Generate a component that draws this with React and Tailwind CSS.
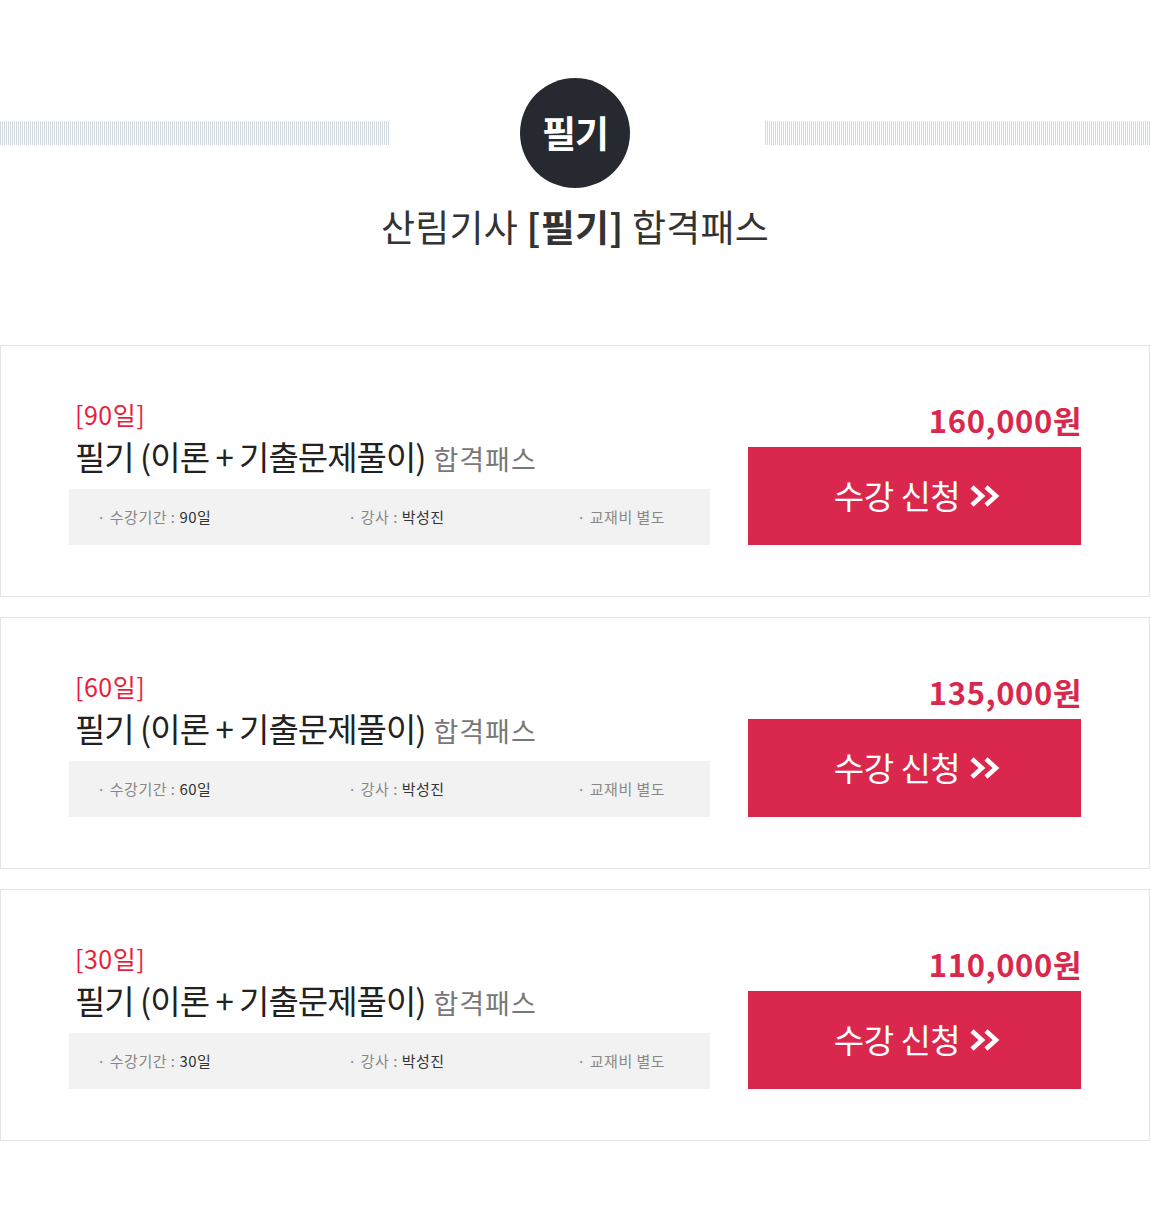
import React from 'react';

const courses = [
  { days: 90, price: '160,000' },
  { days: 60, price: '135,000' },
  { days: 30, price: '110,000' },
];

const Stripe = ({ className }) => (
  <div
    className={`h-[24px] bg-[repeating-linear-gradient(90deg,#d2dadf_0_1px,transparent_1px_2px)] ${className}`}
  />
);

const Chevrons = () => (
  <svg width="31" height="22" viewBox="0 0 31 22" fill="none" className="ml-[10px]">
    <path d="M2 2 L12 11 L2 20" stroke="white" strokeWidth="4.5" />
    <path d="M16 2 L26 11 L16 20" stroke="white" strokeWidth="4.5" />
  </svg>
);

const CourseCard = ({ days, price }) => (
  <div className="h-[252px] border border-[#e3e3e3] flex items-end justify-between pl-[68px] pr-[68px] pb-[51px]">
    <div className="w-[641px]">
      <p className="pl-[6px] text-[25px] leading-[30px] text-[#ec1c3d] tracking-[0.5px]">[{days}일]</p>
      <p className="pl-[6px] mt-[5px] leading-[44px] text-[#222] flex items-baseline">
        <span className="text-[33px] tracking-[-1px]">필기 (이론 + 기출문제풀이)</span>
        <span className="ml-[8px] text-[27px] text-[#777] tracking-[1px]">합격패스</span>
      </p>
      <div className="mt-[8px] h-[56px] bg-[#f2f2f2] flex items-center text-[15px] text-[#888] tracking-[0.5px]">
        <span className="ml-[28px] w-[251px]">
          · 수강기간 : <span className="text-[#333]">{days}일</span>
        </span>
        <span className="w-[229px]">
          · 강사 : <span className="text-[#333]">박성진</span>
        </span>
        <span>· 교재비 별도</span>
      </div>
    </div>
    <div className="w-[333px] flex flex-col items-end">
      <p className="-mr-[1px] text-[31px] leading-[40px] font-bold text-[#d9284d] tracking-[0.6px]">{price}원</p>
      <button className="mt-[7px] w-[333px] h-[98px] bg-[#da274d] text-white flex items-center justify-center pl-[6px]">
        <span className="text-[33px] tracking-[-0.5px]">수강 신청</span>
        <Chevrons />
      </button>
    </div>
  </div>
);

const App = () => {
  return (
    <div className="w-[1150px] min-h-[1231px] bg-white font-['Noto_Sans_CJK_KR',sans-serif]">
      <div className="pt-[78px] flex items-center">
        <Stripe className="w-[389px]" />
        <div className="ml-[131px] w-[110px] h-[110px] rounded-full bg-[#262a30] flex items-center justify-center">
          <span className="text-white text-[37px] font-bold leading-none tracking-[-1px] -mt-[2px]">필기</span>
        </div>
        <Stripe className="ml-[135px] flex-1" />
      </div>
      <h1 className="mt-[12px] text-center text-[37px] leading-[52px] text-[#333] tracking-[0.2px]">
        산림기사 <span className="font-bold">[필기]</span> 합격패스
      </h1>
      <div className="mt-[93px]">
        {courses.map((c) => (
          <div key={c.days} className="mb-[20px]">
            <CourseCard {...c} />
          </div>
        ))}
      </div>
    </div>
  );
};

export default App;
